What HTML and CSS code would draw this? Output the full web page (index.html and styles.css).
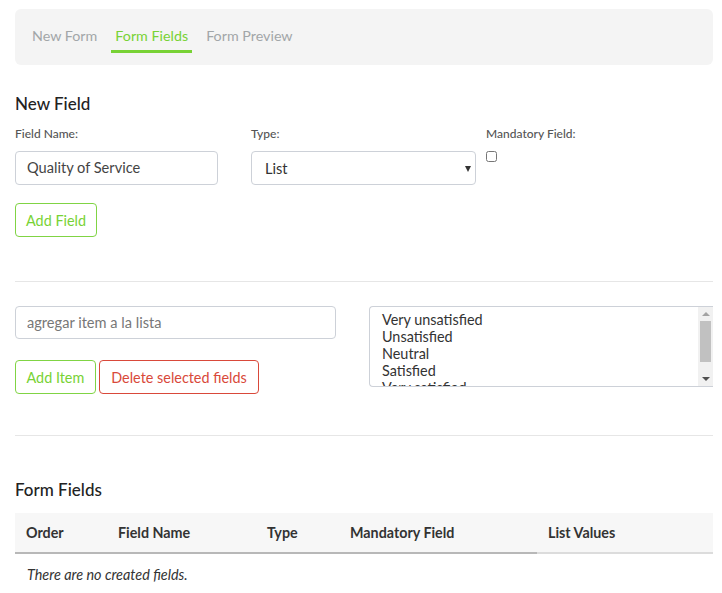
FILE: index.html
```html
<!DOCTYPE html>
<html>
<head>
<meta charset="utf-8">
<link rel="stylesheet" href="styles.css">
</head>
<body>
<div class="page">
  <nav class="tabs">
    <a class="tab">New Form</a>
    <a class="tab active">Form Fields</a>
    <a class="tab">Form Preview</a>
  </nav>

  <h3 class="heading first">New Field</h3>
  <div class="row-fields">
    <div class="col col-name">
      <label class="lbl">Field Name:</label>
      <input class="inp" type="text" value="Quality of Service">
    </div>
    <div class="col col-type">
      <label class="lbl">Type:</label>
      <div class="select-wrap">
        <select class="sel">
          <option>List</option>
        </select>
      </div>
    </div>
    <div class="col col-mand">
      <label class="lbl">Mandatory Field:</label>
      <input class="chk" type="checkbox">
    </div>
  </div>
  <div class="btn-row">
    <button class="btn btn-green">Add Field</button>
  </div>

  <hr class="sep sep1">

  <div class="row-list">
    <div class="list-left">
      <input class="inp inp-item" type="text" placeholder="agregar item a la lista">
      <div class="btn-row2">
        <button class="btn btn-green btn-item">Add Item</button>
        <button class="btn btn-red">Delete selected fields</button>
      </div>
    </div>
    <div class="list-right">
      <div class="listbox">
        <div class="list-items">
          <div class="opt">Very unsatisfied</div>
          <div class="opt">Unsatisfied</div>
          <div class="opt">Neutral</div>
          <div class="opt">Satisfied</div>
          <div class="opt">Very satisfied</div>
        </div>
        <div class="scrollbar">
          <span class="sb-btn"><span class="tri-up"></span></span>
          <span class="sb-thumb"></span>
          <span class="sb-fill"></span>
          <span class="sb-btn"><span class="tri-down"></span></span>
        </div>
      </div>
    </div>
  </div>

  <hr class="sep sep2">

  <h3 class="heading second">Form Fields</h3>
  <table class="tbl">
    <thead>
      <tr>
        <th class="c1">Order</th>
        <th class="c2">Field Name</th>
        <th class="c3">Type</th>
        <th class="c4">Mandatory Field</th>
        <th class="c5">List Values</th>
      </tr>
    </thead>
    <tbody>
      <tr><td class="empty" colspan="5">There are no created fields.</td></tr>
    </tbody>
  </table>
</div>
</body>
</html>
```

FILE: styles.css
```css
html, body {
  margin: 0;
  padding: 0;
  background: #fff;
}
body {
  font-family: Lato, "Open Sans", sans-serif;
  color: #333;
  font-size: 14px;
}
.page {
  margin: 9px 9px 0 15px;
}
.tabs {
  height: 56px;
  box-sizing: border-box;
  background: #f4f4f4;
  border-radius: 6px;
  display: flex;
  align-items: flex-start;
  gap: 10px;
  padding: 18px 0 0 13px;
}
.tab {
  display: block;
  padding: 0 4px 6px;
  line-height: 17px;
  font-size: 14.3px;
  color: #a2a6a8;
  border-bottom: 3px solid transparent;
}
.tab.active {
  color: #78d235;
  border-bottom-color: #78d235;
}
.heading {
  margin: 0;
  font-size: 17px;
  line-height: 20px;
  font-weight: 500;
  color: #222;
}
.heading.first { margin-top: 29px; }
.row-fields {
  display: flex;
  margin-top: 12px;
}
.col-name { width: 203px; margin-right: 33px; }
.col-type { width: 225px; margin-right: 10px; }
.lbl {
  display: block;
  font-size: 12px;
  line-height: 15px;
  color: #555;
  font-weight: 500;
  margin-bottom: 10px;
}
.inp {
  display: block;
  box-sizing: border-box;
  width: 100%;
  height: 34px;
  border: 1px solid #cdd1d8;
  border-radius: 4px;
  padding: 0 11px 1px;
  font-family: inherit;
  font-size: 14.6px;
  color: #444;
  outline: none;
}
.inp::placeholder { color: #777; }
.select-wrap { position: relative; }
.select-wrap::after {
  content: "";
  position: absolute;
  right: 5px;
  top: 15px;
  border-left: 3px solid transparent;
  border-right: 3px solid transparent;
  border-top: 6px solid #333;
}
.sel {
  display: block;
  -webkit-appearance: none;
  appearance: none;
  box-sizing: border-box;
  width: 100%;
  height: 34px;
  border: 1px solid #cdd1d8;
  border-radius: 4px;
  background: #fff;
  padding: 0 13px;
  font-family: inherit;
  font-size: 14.6px;
  color: #333;
}
.chk {
  width: 11px;
  height: 11px;
  display: block;
  margin: 4px 0 0 0;
}
.btn-row { margin-top: 18px; }
.btn {
  box-sizing: border-box;
  height: 34px;
  padding: 0 10px;
  border-radius: 4px;
  background: #fff;
  font-family: inherit;
  font-size: 14.4px;
  cursor: pointer;
}
.btn-item { padding: 0 10.5px; }
.btn-green { border: 1px solid #80d444; color: #78d235; }
.btn-red { border: 1px solid #d9493a; color: #d9493a; padding: 0 11.5px; }
.sep {
  border: 0;
  border-top: 1px solid #e6e6e6;
  margin: 0;
}
.sep1 { margin-top: 44px; }
.row-list {
  display: flex;
  margin-top: 24px;
}
.list-left { width: 321px; margin-right: 33px; }
.inp-item { height: 33px; }
.btn-row2 {
  margin-top: 21px;
  display: flex;
  gap: 3px;
}
.list-right { width: 344px; }
.listbox {
  display: flex;
  box-sizing: border-box;
  width: 100%;
  height: 81px;
  border: 1px solid #cdd1d8;
  border-right: 0;
  border-radius: 4px 0 0 4px;
  overflow: hidden;
  background: #fff;
}
.list-items {
  flex: 1;
  overflow: hidden;
  padding: 4px 0 0 12px;
  font-size: 14.4px;
  color: #333;
}
.opt { line-height: 17px; white-space: nowrap; }
.scrollbar {
  width: 15px;
  background: #f1f1f1;
  display: flex;
  flex-direction: column;
  align-items: center;
}
.sb-btn {
  height: 14px;
  width: 15px;
  display: flex;
  align-items: center;
  justify-content: center;
}
.tri-up {
  width: 0;
  height: 0;
  border-left: 4px solid transparent;
  border-right: 4px solid transparent;
  border-bottom: 4px solid #a3a3a3;
}
.tri-down {
  width: 0;
  height: 0;
  border-left: 4px solid transparent;
  border-right: 4px solid transparent;
  border-top: 4px solid #505050;
}
.sb-thumb {
  width: 11px;
  height: 41px;
  background: #c1c1c1;
}
.sb-fill { flex: 1; }
.sep2 { margin-top: 41px; }
.heading.second { margin-top: 44px; }
.tbl {
  margin-top: 13px;
  width: 698px;
  border-collapse: collapse;
  table-layout: fixed;
}
.tbl th {
  height: 40px;
  padding: 0 11px;
  text-align: left;
  background: #f7f7f7;
  font-size: 14.3px;
  font-weight: 700;
  color: #333;
  border-bottom: 2px solid #b8b8b8;
}
.tbl th.c5 { border-bottom-color: #dcdcdc; }
.c1 { width: 92px; }
.c2 { width: 149px; }
.c3 { width: 83px; }
.c4 { width: 198px; }
.tbl td.empty {
  height: 40px;
  padding: 0 12px;
  font-style: italic;
  color: #333;
  font-size: 14.4px;
}
.c1, .c2, .c3, .c4, .c5 { box-sizing: border-box; }
```
